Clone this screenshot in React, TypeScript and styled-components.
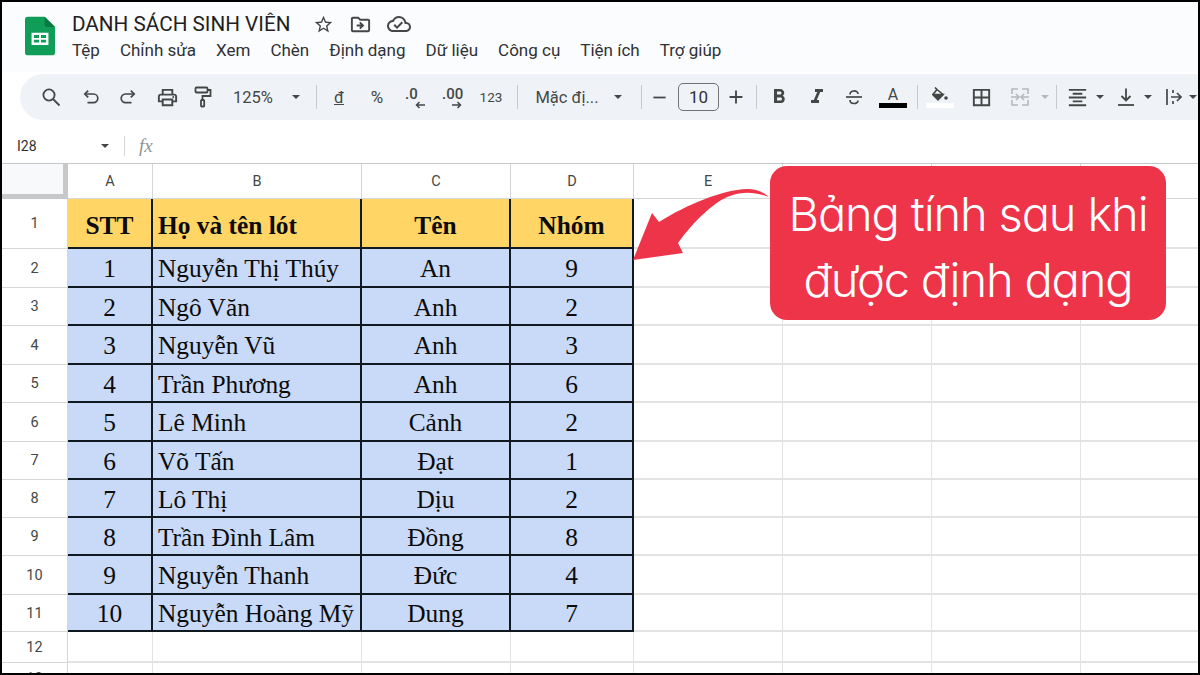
import React from "react";
import styled, { createGlobalStyle } from "styled-components";
import {
  MdOutlinePrint,
  MdAdd,
  MdRemove,
  MdFormatBold,
  MdFormatItalic,
  MdBorderAll,
  MdFormatAlignCenter,
  MdStarBorder,
  MdOutlineDriveFileMove,
  MdOutlineCloudDone,
} from "react-icons/md";

const GlobalStyle = createGlobalStyle`
  html, body {
    margin: 0;
    padding: 0;
    background: #fff;
    overflow: hidden;
  }
  * { box-sizing: border-box; }
`;

const Page = styled.div`
  position: relative;
  width: 1200px;
  height: 675px;
  overflow: hidden;
  background: #fff;
  border: 2px solid #000;
  font-family: Roboto, "Noto Sans", sans-serif;
`;

const TitleBar = styled.header`
  height: 70px;
  display: flex;
  padding: 10px 0 0 23px;
  background: #fbfcfe;
`;

const LogoBox = styled.div`
  width: 30px;
  margin-top: 4px;
`;

const TitleColumn = styled.div`
  margin-left: 17px;
  display: flex;
  flex-direction: column;
`;

const TitleRow = styled.div`
  display: flex;
  align-items: center;
  height: 24px;
  color: #1f1f1f;
`;

const DocName = styled.span`
  font-size: 20.7px;
  white-space: nowrap;
`;

const TitleIcons = styled.div`
  display: flex;
  align-items: center;
  gap: 15px;
  margin-left: 23px;
  color: #444746;
  svg { display: block; }
`;

const MenuRow = styled.nav`
  display: flex;
  gap: 20px;
  margin-top: 2px;
  font-size: 17px;
  line-height: 24px;
  color: #303134;
`;

const Toolbar = styled.div`
  margin: 2px 0 0 18px;
  height: 46px;
  border-radius: 23px 0 0 23px;
  background: #eff3f8;
  display: flex;
  align-items: center;
  padding-left: 11px;
  color: #444746;
  white-space: nowrap;
`;

const Tool = styled.span<{ $w: number; $ml?: number }>`
  flex: none;
  width: ${(p) => p.$w}px;
  margin-left: ${(p) => p.$ml ?? 0}px;
  display: flex;
  align-items: center;
  justify-content: center;
  color: #444746;
  svg { display: block; }
`;

const ToolText = styled(Tool)<{ $size?: number }>`
  font-size: ${(p) => p.$size ?? 16.5}px;
`;

const Divider = styled.span<{ $ml?: number }>`
  flex: none;
  width: 1px;
  height: 24px;
  background: #c7c9cc;
  margin-left: ${(p) => p.$ml ?? 0}px;
`;

const Caret = styled.span<{ $muted?: boolean; $ml?: number }>`
  flex: none;
  width: 0;
  height: 0;
  margin-left: ${(p) => p.$ml ?? 0}px;
  border-left: 4.5px solid transparent;
  border-right: 4.5px solid transparent;
  border-top: 4.5px solid ${(p) => (p.$muted ? "#b5b9bd" : "#444746")};
`;

const SizeBox = styled.span`
  flex: none;
  width: 41px;
  height: 28px;
  margin-left: 2px;
  border: 1px solid #6f7276;
  border-radius: 5px;
  display: flex;
  align-items: center;
  justify-content: center;
  font-size: 17px;
  color: #303134;
`;

const ColorA = styled.span`
  flex: none;
  width: 28px;
  margin-left: 4px;
  display: flex;
  flex-direction: column;
  align-items: center;
  font-size: 16px;
  line-height: 17px;
  color: #444746;
  &::after {
    content: "";
    width: 28px;
    height: 5px;
    background: #000;
  }
`;

const FillIcon = styled.span`
  flex: none;
  width: 28px;
  margin-left: 8px;
  display: flex;
  flex-direction: column;
  align-items: center;
  gap: 2px;
  svg { display: block; }
  &::after {
    content: "";
    width: 28px;
    height: 5px;
    background: #fff;
  }
`;

const DecimalTool = styled.span<{ $w: number; $pl: number }>`
  flex: none;
  width: ${(p) => p.$w}px;
  padding-left: ${(p) => p.$pl}px;
  padding-bottom: 7px;
  position: relative;
  font-size: 15px;
  font-weight: 500;
  line-height: 14px;
  color: #444746;
`;

const DecimalArrow = styled.svg<{ $left: number }>`
  position: absolute;
  left: ${(p) => p.$left}px;
  top: 14px;
`;

const FormulaBar = styled.div`
  margin-top: 9px;
  height: 34px;
  display: flex;
  align-items: center;
  padding-left: 15px;
  font-size: 14px;
  color: #303134;
`;

const CellName = styled.span`
  width: 84px;
`;

const FxLabel = styled.span`
  margin-left: 15px;
  padding-left: 14px;
  border-left: 1px solid #d5d7da;
  height: 20px;
  line-height: 20px;
  font-family: "Liberation Serif", serif;
  font-style: italic;
  font-size: 19px;
  color: #909396;
`;

const Sheet = styled.div`
  display: grid;
  grid-template-columns: 66px 85px 209px 149px 123px 149px 149px 149px 149px;
  grid-template-rows: 35px 50px 39px 38px 39px 38px 39px 38px 38px 38px 39px 37px 31px 31px;
  border-top: 1px solid #c4c6c8;
`;

const Corner = styled.div`
  background: #f8f9fa;
  border-right: 5px solid #c6c8ca;
  border-bottom: 5px solid #c6c8ca;
`;

const HeadCell = styled.div`
  display: flex;
  align-items: center;
  justify-content: center;
  font-size: 14.5px;
  color: #444746;
  background: #fff;
  border-right: 1px solid #d4d6d8;
  border-bottom: 1px solid #d4d6d8;
`;

const Blank = styled.div`
  border-right: 1px solid #e1e3e5;
  border-bottom: 2px solid #e1e3e5;
`;

const DataCell = styled.div<{ $head?: boolean; $left?: boolean }>`
  display: flex;
  align-items: center;
  justify-content: ${(p) => (p.$left ? "flex-start" : "center")};
  padding-left: ${(p) => (p.$left ? "5px" : "0")};
  padding-top: ${(p) => (p.$head ? "4px" : "2px")};
  font-family: "Liberation Serif", serif;
  font-size: 25.4px;
  font-weight: ${(p) => (p.$head ? 700 : 400)};
  color: #0b0b0b;
  white-space: nowrap;
  background: ${(p) => (p.$head ? "#ffd666" : "#c9daf8")};
  border-right: 2px solid #101820;
  border-bottom: 2px solid #101820;
`;

const Callout = styled.div`
  position: absolute;
  left: 768px;
  top: 164px;
  width: 396px;
  height: 154px;
  border-radius: 17px;
  background: #ee3449;
  color: #fff;
  font-family: Inter, sans-serif;
  font-feature-settings: "cv11";
  font-weight: 300;
  font-size: 47px;
  letter-spacing: -1.15px;
  line-height: 66px;
  text-align: center;
  padding-top: 15px;
  white-space: nowrap;
`;

const ArrowSvg = styled.svg`
  position: absolute;
  left: 628px;
  top: 184px;
`;

const rows: [string, string, string, string][] = [
  ["1", "Nguyễn Thị Thúy", "An", "9"],
  ["2", "Ngô Văn", "Anh", "2"],
  ["3", "Nguyễn Vũ", "Anh", "3"],
  ["4", "Trần Phương", "Anh", "6"],
  ["5", "Lê Minh", "Cảnh", "2"],
  ["6", "Võ Tấn", "Đạt", "1"],
  ["7", "Lô Thị", "Dịu", "2"],
  ["8", "Trần Đình Lâm", "Đồng", "8"],
  ["9", "Nguyễn Thanh", "Đức", "4"],
  ["10", "Nguyễn Hoàng Mỹ", "Dung", "7"],
];

const menus = ["Tệp", "Chỉnh sửa", "Xem", "Chèn", "Định dạng", "Dữ liệu", "Công cụ", "Tiện ích", "Trợ giúp"];
const columns = ["A", "B", "C", "D", "E", "", "", ""];

const SheetsLogo = () => (
  <svg width="30" height="40" viewBox="0 0 32 41">
    <path d="M3 0H21L32 11V38a3 3 0 0 1-3 3H3a3 3 0 0 1-3-3V3a3 3 0 0 1 3-3Z" fill="#0f9d58" />
    <path d="M21 0L32 11H24a3 3 0 0 1-3-3Z" fill="#0a7a43" />
    <path d="M7 17H25V30H7ZM9.5 19.5V22.5H15V19.5ZM17 19.5V22.5H22.5V19.5ZM9.5 24.5V27.5H15V24.5ZM17 24.5V27.5H22.5V24.5Z" fill="#fff" fillRule="evenodd" />
  </svg>
);

const Line = styled.svg.attrs({ fill: "none", stroke: "#444746" })``;

const SearchIcon = () => (
  <Line width="20" height="20" viewBox="0 0 20 20" strokeWidth="1.8">
    <circle cx="8" cy="8" r="5.6" />
    <path d="M12 12l6.5 6.5" />
  </Line>
);

const UndoIcon = () => (
  <Line width="18" height="18" viewBox="0 0 18 18" strokeWidth="1.7">
    <path d="M3 6h8.5a4.3 4.3 0 0 1 0 8.6H5.5" />
    <path d="M6.2 2.6L2.8 6l3.4 3.4" />
  </Line>
);

const RedoIcon = () => (
  <Line width="18" height="18" viewBox="0 0 18 18" strokeWidth="1.7">
    <path d="M15 6H6.5a4.3 4.3 0 0 0 0 8.6h6" />
    <path d="M11.8 2.6L15.2 6l-3.4 3.4" />
  </Line>
);

const RollerIcon = () => (
  <Line width="18" height="22" viewBox="0 0 18 22" strokeWidth="1.8">
    <rect x="1.5" y="1.5" width="12" height="5" rx="1" />
    <path d="M13.5 4H16.5V10H8.5V14" />
    <rect x="7" y="14" width="3.2" height="6.5" rx="0.8" />
  </Line>
);

const StrikeIcon = () => (
  <Line width="20" height="20" viewBox="0 0 20 20" strokeWidth="1.7">
    <path d="M2 10h16" />
    <path d="M6 7.5c0-4.6 8-4.6 8-.6M6 13c0 4.6 8 4.6 8 .4" />
  </Line>
);

const PaintBucket = () => (
  <Line width="17" height="14" viewBox="0 0 17 14" strokeWidth="1.6">
    <path d="M3 0.5l2 2M5 2.5l6 5-5 5-5-5Z" />
    <path d="M1 7.5h10l-5 5Z" fill="#444746" />
    <circle cx="14" cy="11" r="1.8" fill="#444746" stroke="none" />
  </Line>
);

const MergeIcon = () => (
  <svg width="20" height="20" viewBox="0 0 20 20" fill="none" stroke="#b5b9bd" strokeWidth="1.6">
    <path d="M8 2H2v5M2 13v5h6M12 2h6v5M18 13v5h-6" />
    <path d="M1 10h7M6 7l3 3-3 3M19 10h-7M14 7l-3 3 3 3" />
  </svg>
);

const AlignBottomIcon = () => (
  <Line width="20" height="20" viewBox="0 0 20 20" strokeWidth="1.8">
    <path d="M10 1.5v12M5.5 9l4.5 4.5L14.5 9" />
    <path d="M2 18h16" />
  </Line>
);

const IndentIcon = () => (
  <Line width="18" height="18" viewBox="0 0 18 18" strokeWidth="1.7">
    <path d="M2 1v16M6 9h10M12 5l4 4-4 4" />
    <path d="M8 2v3M8 13v3" />
  </Line>
);

export default function App() {
  return (
    <Page>
      <GlobalStyle />
      <TitleBar>
        <LogoBox>
          <SheetsLogo />
        </LogoBox>
        <TitleColumn>
          <TitleRow>
            <DocName>DANH SÁCH SINH VIÊN</DocName>
            <TitleIcons>
              <MdStarBorder size={21} />
              <MdOutlineDriveFileMove size={23} />
              <MdOutlineCloudDone size={24} />
            </TitleIcons>
          </TitleRow>
          <MenuRow>
            {menus.map((m) => (
              <span key={m}>{m}</span>
            ))}
          </MenuRow>
        </TitleColumn>
      </TitleBar>
      <Toolbar>
        <Tool $w={40}><SearchIcon /></Tool>
        <Tool $w={40}><UndoIcon /></Tool>
        <Tool $w={34}><RedoIcon /></Tool>
        <Tool $w={44}><MdOutlinePrint size={23} /></Tool>
        <Tool $w={28}><RollerIcon /></Tool>
        <ToolText $w={72}>125%</ToolText>
        <Caret $ml={2.5} />
        <Divider $ml={16.5} />
        <ToolText $w={44}><u>đ</u></ToolText>
        <ToolText $w={32} $size={17}>%</ToolText>
        <DecimalTool $w={40} $pl={12}>
          .0
          <DecimalArrow $left={22} width="10" height="8" viewBox="0 0 10 8" fill="none" stroke="#444746" strokeWidth="1.5">
            <path d="M10 4H1.5M4.5 1L1.5 4l3 3" />
          </DecimalArrow>
        </DecimalTool>
        <DecimalTool $w={38} $pl={9}>
          .00
          <DecimalArrow $left={19} width="10" height="8" viewBox="0 0 10 8" fill="none" stroke="#444746" strokeWidth="1.5">
            <path d="M0 4h8.5M5.5 1l3 3-3 3" />
          </DecimalArrow>
        </DecimalTool>
        <ToolText $w={40} $size={13.5}>123</ToolText>
        <Divider $ml={6} />
        <ToolText $w={98}>Mặc đị...</ToolText>
        <Caret $ml={-2} />
        <Divider $ml={19} />
        <Tool $w={34}><MdRemove size={21} /></Tool>
        <SizeBox>10</SizeBox>
        <Tool $w={34}><MdAdd size={22} /></Tool>
        <Divider $ml={3} />
        <Tool $w={43}><MdFormatBold size={24} /></Tool>
        <Tool $w={33}><MdFormatItalic size={24} /></Tool>
        <Tool $w={42}><StrikeIcon /></Tool>
        <ColorA>A</ColorA>
        <Divider $ml={10} />
        <FillIcon><PaintBucket /></FillIcon>
        <Tool $w={54}><MdBorderAll size={23} /></Tool>
        <Tool $w={24}><MergeIcon /></Tool>
        <Caret $muted $ml={8.5} />
        <Divider $ml={7.5} />
        <Tool $w={37} $ml={2}><MdFormatAlignCenter size={23} /></Tool>
        <Caret />
        <Tool $w={36} $ml={4}><AlignBottomIcon /></Tool>
        <Caret />
        <Tool $w={30} $ml={7}><IndentIcon /></Tool>
        <Caret />
      </Toolbar>
      <FormulaBar>
        <CellName>I28</CellName>
        <Caret />
        <FxLabel>fx</FxLabel>
      </FormulaBar>
      <Sheet>
        <Corner />
        {columns.map((c, i) => (
          <HeadCell key={i}>{c}</HeadCell>
        ))}

        <HeadCell>1</HeadCell>
        <DataCell $head>STT</DataCell>
        <DataCell $head $left>Họ và tên lót</DataCell>
        <DataCell $head>Tên</DataCell>
        <DataCell $head>Nhóm</DataCell>
        <Blank /><Blank /><Blank /><Blank />

        {rows.map((r, i) => (
          <React.Fragment key={r[0]}>
            <HeadCell>{i + 2}</HeadCell>
            <DataCell>{r[0]}</DataCell>
            <DataCell $left>{r[1]}</DataCell>
            <DataCell>{r[2]}</DataCell>
            <DataCell>{r[3]}</DataCell>
            <Blank /><Blank /><Blank /><Blank />
          </React.Fragment>
        ))}

        {[12, 13].map((n) => (
          <React.Fragment key={n}>
            <HeadCell>{n}</HeadCell>
            <Blank /><Blank /><Blank /><Blank /><Blank /><Blank /><Blank /><Blank />
          </React.Fragment>
        ))}
      </Sheet>
      <ArrowSvg width="142" height="80" viewBox="0 0 142 80">
        <path d="M3 74L22 27L29 36C58 18 92 4 117 3C126 3 134 6 139 11C126 6 113 5 100 10C85 15 64 35 48 57L53 67Z" fill="#ee3449" />
      </ArrowSvg>
      <Callout>
        Bảng tính sau khi
        <br />
        được định dạng
      </Callout>
    </Page>
  );
}
